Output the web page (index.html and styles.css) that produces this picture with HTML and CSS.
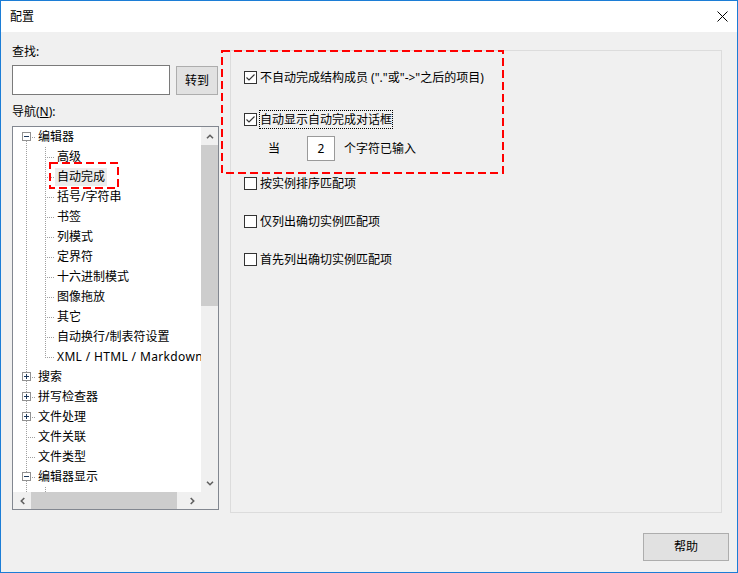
FILE: index.html
```html
<!DOCTYPE html>
<html lang="zh-CN">
<head>
<meta charset="utf-8">
<title>配置</title>
<link rel="stylesheet" href="styles.css">
</head>
<body>
<div class="window">
  <div class="titlebar">
    <span class="title">配置</span>
    <svg class="close" width="11" height="11" viewBox="0 0 11 11"><path d="M0.5 0.5L10.5 10.5M10.5 0.5L0.5 10.5" stroke="#000" stroke-width="1" fill="none"/></svg>
  </div>
  <div class="body">
    <div class="top">
      <div class="left">
        <div class="label">查找:</div>
        <div class="search-row">
          <div class="textbox"></div>
          <button class="btn go">转到</button>
        </div>
        <div class="label nav">导航(<u>N</u>):</div>
        <div class="tree">
          <div class="tree-rows">
            <div class="row"><span class="g g0r root-first"><svg class="ex" width="9" height="9" viewBox="0 0 9 9"><rect x=".5" y=".5" width="8" height="8" fill="#fff" stroke="#919191"/><path d="M2 4.5h5" stroke="#1e395b"/></svg></span><span class="txt">编辑器</span></div>
            <div class="row"><span class="g g0c pass"></span><span class="g g1 child"></span><span class="txt">高级</span></div>
            <div class="row"><span class="g g0c pass"></span><span class="g g1 child"></span><span class="txt sel">自动完成</span></div>
            <div class="row"><span class="g g0c pass"></span><span class="g g1 child"></span><span class="txt">括号/字符串</span></div>
            <div class="row"><span class="g g0c pass"></span><span class="g g1 child"></span><span class="txt">书签</span></div>
            <div class="row"><span class="g g0c pass"></span><span class="g g1 child"></span><span class="txt">列模式</span></div>
            <div class="row"><span class="g g0c pass"></span><span class="g g1 child"></span><span class="txt">定界符</span></div>
            <div class="row"><span class="g g0c pass"></span><span class="g g1 child"></span><span class="txt">十六进制模式</span></div>
            <div class="row"><span class="g g0c pass"></span><span class="g g1 child"></span><span class="txt">图像拖放</span></div>
            <div class="row"><span class="g g0c pass"></span><span class="g g1 child"></span><span class="txt">其它</span></div>
            <div class="row"><span class="g g0c pass"></span><span class="g g1 child"></span><span class="txt">自动换行/制表符设置</span></div>
            <div class="row"><span class="g g0c pass"></span><span class="g g1 child-last"></span><span class="txt wide">XML / HTML / Markdown</span></div>
            <div class="row"><span class="g g0r root"><svg class="ex" width="9" height="9" viewBox="0 0 9 9"><rect x=".5" y=".5" width="8" height="8" fill="#fff" stroke="#919191"/><path d="M2 4.5h5M4.5 2v5" stroke="#1e395b"/></svg></span><span class="txt">搜索</span></div>
            <div class="row"><span class="g g0r root"><svg class="ex" width="9" height="9" viewBox="0 0 9 9"><rect x=".5" y=".5" width="8" height="8" fill="#fff" stroke="#919191"/><path d="M2 4.5h5M4.5 2v5" stroke="#1e395b"/></svg></span><span class="txt">拼写检查器</span></div>
            <div class="row"><span class="g g0r root"><svg class="ex" width="9" height="9" viewBox="0 0 9 9"><rect x=".5" y=".5" width="8" height="8" fill="#fff" stroke="#919191"/><path d="M2 4.5h5M4.5 2v5" stroke="#1e395b"/></svg></span><span class="txt">文件处理</span></div>
            <div class="row"><span class="g g0r root"></span><span class="txt">文件关联</span></div>
            <div class="row"><span class="g g0r root"></span><span class="txt">文件类型</span></div>
            <div class="row"><span class="g g0r root"><svg class="ex" width="9" height="9" viewBox="0 0 9 9"><rect x=".5" y=".5" width="8" height="8" fill="#fff" stroke="#919191"/><path d="M2 4.5h5" stroke="#1e395b"/></svg></span><span class="txt">编辑器显示</span></div>
            <div class="row"><span class="g g0c pass"></span><span class="g g1 child"></span></div>
          </div>
          <div class="vscroll">
            <div class="sb-btn up"><svg width="8" height="5" viewBox="0 0 8 5"><path d="M1 4.3L4 1.3L7 4.3" fill="none" stroke="#606060" stroke-width="1.6"/></svg></div>
            <div class="vthumb"></div>
            <div class="track"></div>
            <div class="sb-btn dn"><svg width="8" height="5" viewBox="0 0 8 5"><path d="M1 0.7L4 3.7L7 0.7" fill="none" stroke="#606060" stroke-width="1.6"/></svg></div>
          </div>
          <div class="hscroll">
            <div class="sb-btn lf"><svg width="5" height="8" viewBox="0 0 5 8"><path d="M4.3 1L1.3 4L4.3 7" fill="none" stroke="#606060" stroke-width="1.6"/></svg></div>
            <div class="hthumb"></div>
            <div class="track"></div>
            <div class="sb-btn rt"><svg width="5" height="8" viewBox="0 0 5 8"><path d="M0.7 1L3.7 4L0.7 7" fill="none" stroke="#606060" stroke-width="1.6"/></svg></div>
          </div>
          <div class="corner"></div>
        </div>
      </div>
      <div class="panel">
        <div class="cb-row">
          <span class="cb"><svg width="11" height="11" viewBox="0 0 11 11"><path d="M1.5 5.5L4 8L9.5 2.5" fill="none" stroke="#333" stroke-width="1.1"/></svg></span>
          <span class="cb-label">不自动完成结构成员 ("."或"->"之后的项目)</span>
        </div>
        <div class="cb-row r2">
          <span class="cb"><svg width="11" height="11" viewBox="0 0 11 11"><path d="M1.5 5.5L4 8L9.5 2.5" fill="none" stroke="#333" stroke-width="1.1"/></svg></span>
          <span class="cb-label focus">自动显示自动完成对话框</span>
        </div>
        <div class="count-row">
          <span>当</span>
          <span class="num">2</span>
          <span class="suffix">个字符已输入</span>
        </div>
        <div class="cb-row r3">
          <span class="cb"></span>
          <span class="cb-label">按实例排序匹配项</span>
        </div>
        <div class="cb-row r4">
          <span class="cb"></span>
          <span class="cb-label">仅列出确切实例匹配项</span>
        </div>
        <div class="cb-row r4">
          <span class="cb"></span>
          <span class="cb-label">首先列出确切实例匹配项</span>
        </div>
      </div>
    </div>
    <div class="footer">
      <button class="btn help">帮助</button>
    </div>
  </div>
  <svg class="anno anno-big" width="283" height="124" viewBox="0 0 283 124"><rect x="1" y="1" width="281" height="122" fill="none" stroke="#ff0000" stroke-width="2" stroke-dasharray="8 4"/></svg>
  <svg class="anno anno-small" width="70" height="27" viewBox="0 0 70 27"><rect x="1" y="1" width="68" height="25" fill="none" stroke="#ff0000" stroke-width="2" stroke-dasharray="8 4"/></svg>
</div>
</body>
</html>
```

FILE: styles.css
```css
body {
  margin: 0;
  background: #fff;
  font-family: "Noto Sans", "Noto Sans CJK SC", sans-serif;
  font-size: 12px;
  color: #000;
}

.window {
  --v: repeating-linear-gradient(to bottom, #a0a0a0 0 1px, transparent 1px 2px);
  --h: repeating-linear-gradient(to right, #a0a0a0 0 1px, transparent 1px 2px);
  position: relative;
  width: 738px;
  height: 573px;
  box-sizing: border-box;
  border: 1px solid #1c7dd6;
  background: #f0f0f0;
  display: flex;
  flex-direction: column;
}

.titlebar {
  height: 31px;
  flex: none;
  background: #fff;
  display: flex;
  align-items: center;
  justify-content: space-between;
  padding: 0 9px;
}

.title {
  line-height: 16px;
}

.close {
  display: block;
}

.body {
  flex: 1;
  display: flex;
  flex-direction: column;
}

.top {
  display: flex;
  align-items: flex-start;
}

.left {
  width: 207px;
  margin: 12px 0 0 11px;
}

.label {
  height: 16px;
  line-height: 16px;
}

.search-row {
  display: flex;
  align-items: flex-start;
  margin-top: 5px;
}

.textbox {
  width: 158px;
  height: 30px;
  box-sizing: border-box;
  border: 1px solid #7a7a7a;
  background: #fff;
}

.btn {
  font: inherit;
  color: #000;
  background: #e1e1e1;
  border: 1px solid #adadad;
  padding: 0;
  box-sizing: border-box;
  line-height: 16px;
}

.go {
  width: 42px;
  height: 29px;
  margin: 1px 0 0 6px;
}

.nav {
  margin-top: 9px;
}

.tree {
  margin-top: 6px;
  height: 384px;
  box-sizing: border-box;
  border: 1px solid #828790;
  background: #fff;
  display: grid;
  grid-template-columns: 188px 17px;
  grid-template-rows: 365px 17px;
}

.tree-rows {
  overflow: hidden;
}

.row {
  display: flex;
  align-items: center;
  height: 20px;
  white-space: nowrap;
}

.txt {
  line-height: 16px;
}

.wide {
  letter-spacing: 0.35px;
}

.sel {
  background: #ececec;
  padding: 1px 2px;
  margin-left: -2px;
}

.g {
  flex: none;
  height: 20px;
  display: flex;
  align-items: flex-start;
  background-repeat: no-repeat;
}

.g0r { width: 25px; }
.g0c { width: 19px; }
.g1 { width: 25px; }

.ex {
  display: block;
  margin: 5px 0 0 9px;
}

.root-first {
  background-image: var(--v), var(--h);
  background-position: 13px 10px, 13px 10px;
  background-size: 1px 10px, 10px 1px;
}

.root, .child {
  background-image: var(--v), var(--h);
  background-position: 13px 0, 13px 10px;
  background-size: 1px 20px, 10px 1px;
}

.pass {
  background-image: var(--v);
  background-position: 13px 0;
  background-size: 1px 20px;
}

.child-last {
  background-image: var(--v), var(--h);
  background-position: 13px 0, 13px 10px;
  background-size: 1px 10px, 10px 1px;
}

.vscroll {
  background: #f0f0f0;
  display: flex;
  flex-direction: column;
}

.hscroll {
  background: #f0f0f0;
  display: flex;
}

.corner {
  background: #f0f0f0;
}

.sb-btn {
  flex: none;
  display: flex;
  align-items: center;
  justify-content: center;
}

.sb-btn svg {
  display: block;
}

.up { height: 18px; }
.dn { height: 17px; }
.lf { width: 18px; }
.rt { width: 17px; }

.vthumb {
  height: 161px;
  background: #cdcdcd;
}

.hthumb {
  width: 146px;
  background: #cdcdcd;
}

.track {
  flex: 1;
}

.panel {
  margin: 18px 0 0 11px;
  width: 492px;
  height: 463px;
  box-sizing: border-box;
  border: 1px solid #dcdcdc;
  padding: 16px 0 0 13px;
}

.cb-row {
  display: flex;
  align-items: center;
  height: 20px;
}

.r2 { margin-top: 22px; }
.r3 { margin-top: 12px; }
.r4 { margin-top: 18px; }

.cb {
  flex: none;
  width: 13px;
  height: 13px;
  box-sizing: border-box;
  border: 1px solid #333;
  background: #fff;
}

.cb svg {
  display: block;
}

.cb-label {
  margin-left: 2px;
  border: 1px dotted transparent;
  line-height: 17px;
  white-space: nowrap;
}

.focus {
  border-color: #000;
}

.count-row {
  display: flex;
  align-items: center;
  height: 25px;
  margin-top: 7px;
  padding-left: 24px;
  line-height: 16px;
}

.num {
  width: 28px;
  height: 25px;
  box-sizing: border-box;
  border: 1px solid #9a9a9a;
  background: #fff;
  margin-left: 27px;
  display: flex;
  align-items: center;
  justify-content: center;
}

.suffix {
  margin-left: 9px;
}

.footer {
  display: flex;
  justify-content: flex-end;
  margin-top: 20px;
  padding-right: 8px;
}

.help {
  width: 86px;
  height: 28px;
}

.anno {
  position: absolute;
  display: block;
}

.anno-big {
  left: 220px;
  top: 49px;
}

.anno-small {
  left: 48px;
  top: 161px;
}
```
